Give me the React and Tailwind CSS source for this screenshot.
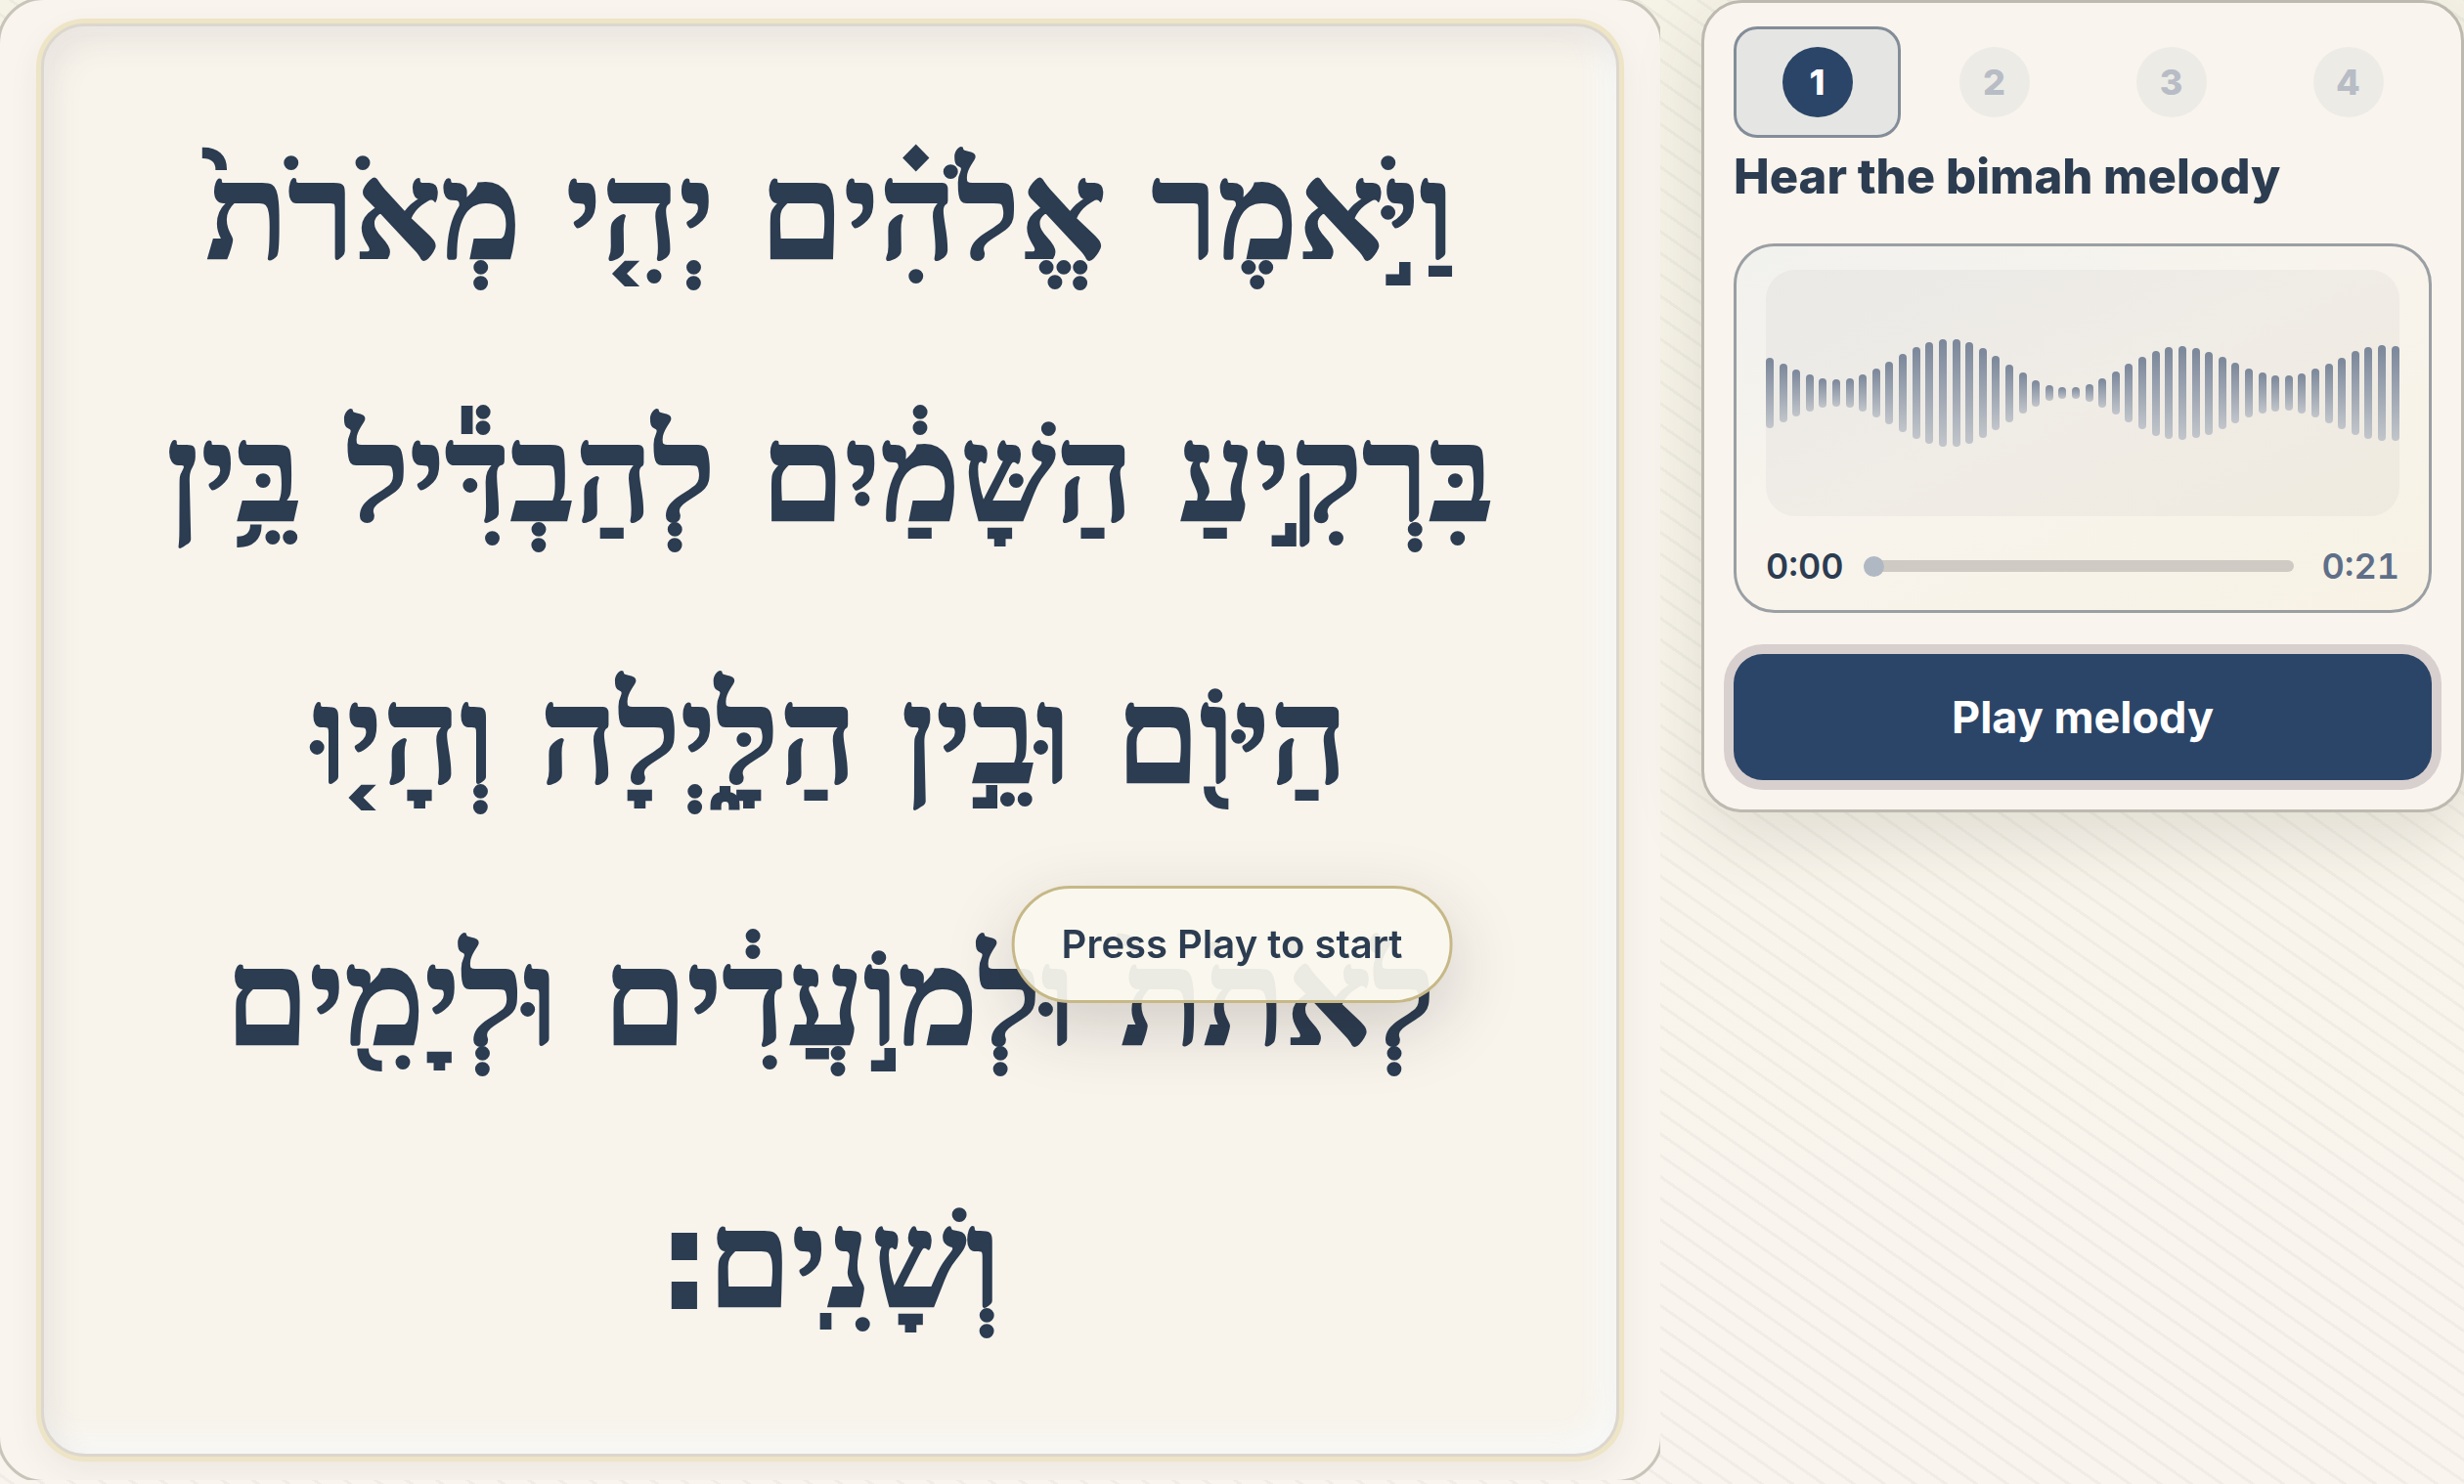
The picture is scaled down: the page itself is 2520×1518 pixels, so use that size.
import clsx from "clsx";

const verse = [
    ["וַיֹּ֣אמֶר", "אֱלֹהִ֗ים", "יְהִ֤י", "מְאֹרֹת֙"],
    ["בִּרְקִ֣יעַ", "הַשָּׁמַ֔יִם", "לְהַבְדִּ֕יל", "בֵּ֥ין"],
    ["הַיּוֹ֖ם", "וּבֵ֣ין", "הַלָּ֑יְלָה", "וְהָי֤וּ"],
    ["לְאֹתֹת֙", "וּלְמוֹ֣עֲדִ֔ים", "וּלְיָמִ֖ים"],
    ["וְשָׁנִֽים"],
];

const bars = [
    72, 60, 48, 38, 30, 28, 30, 38, 50, 64, 80, 94, 104, 110, 110, 104,
    92, 76, 59, 42, 27, 16, 12, 12, 18, 30, 44, 60, 74, 87, 94, 96,
    92, 85, 74, 62, 50, 42, 37, 36, 41, 50, 61, 73, 86, 94, 98, 97,
];

function VersePanel() {
    return (
        <main className="min-w-0 flex-1 self-start overflow-hidden">
            <div className="-m-[3px] rounded-[48px] border-[3px] border-[#c8c4ba] bg-[#f9f4ed] px-[42px] py-6">
                <div
                    dir="rtl"
                    lang="he"
                    className="rounded-[45px] border-[3px] border-[#dbd7cf] bg-[#f8f4ec] pt-[57px] pb-[63px] font-['Liberation_Serif',serif] text-[138px] font-bold leading-[268px] text-[#2c3c51] shadow-[0_0_0_5px_#eee4c6,0_12px_36px_rgba(70,50,60,0.08),inset_12px_18px_30px_rgba(90,70,80,0.08),inset_-12px_-12px_30px_rgba(247,249,249,0.9)] [-webkit-text-stroke:2px_#2c3c51]"
                >
                    {verse.map((line, i) => (
                        <p key={i} className="flex justify-center gap-[46px] whitespace-nowrap">
                            {line.map((word) => (
                                <span key={word}>{word}</span>
                            ))}
                            {i === verse.length - 1 && (
                                <span className="-ms-12 font-['DejaVu_Sans',sans-serif]">׃</span>
                            )}
                        </p>
                    ))}
                </div>
            </div>
        </main>
    );
}

function Steps() {
    return (
        <nav className="grid grid-cols-4 gap-[10px]">
            {[1, 2, 3, 4].map((step) => (
                <button
                    key={step}
                    type="button"
                    disabled={step !== 1}
                    className={clsx(
                        "flex justify-center rounded-3xl border-[3px] py-[18px]",
                        step === 1 ? "border-[#838d99] bg-[#e5e6e3]" : "border-transparent"
                    )}
                >
                    <span
                        className={clsx(
                            "flex size-[72px] items-center justify-center rounded-full text-[36px] font-extrabold",
                            step === 1 ? "bg-[#2b4568] text-white" : "bg-[#ecebe6] text-[#b7bcc5]"
                        )}
                    >
                        {step}
                    </span>
                </button>
            ))}
        </nav>
    );
}

function Player() {
    return (
        <section className="mt-9 rounded-[42px] border-[3px] border-[#9a9fa3] bg-[linear-gradient(155deg,#f1f1ee_0%,#f8f4ed_45%,#f7f2e4_100%)] px-[30px] pt-6 pb-[18px]">
            <div className="flex h-[252px] items-center justify-between rounded-[30px] bg-[#2b3c50]/4">
                {bars.map((height, i) => (
                    <span
                        key={i}
                        className="w-2 rounded-full bg-linear-to-b from-[#7b879a] to-[#c2c6cb]"
                        style={{ height }}
                    />
                ))}
            </div>
            <div className="mt-6 flex h-[54px] items-center text-[36px] font-semibold tabular-nums">
                <span className="w-[100px] text-[#2c3c51]">0:00</span>
                <input
                    type="range"
                    aria-label="Melody position"
                    min="0"
                    max="21"
                    defaultValue="0"
                    className="h-3 min-w-0 flex-1 appearance-none rounded-full bg-[#cfcbc4] [&::-webkit-slider-thumb]:size-[21px] [&::-webkit-slider-thumb]:appearance-none [&::-webkit-slider-thumb]:rounded-full [&::-webkit-slider-thumb]:bg-[#b0b8c3]"
                />
                <span className="w-[108px] text-right text-[#5f6f89]">0:21</span>
            </div>
        </section>
    );
}

function App() {
    return (
        <div className="flex min-h-screen items-start gap-[42px] bg-[#f9f4ed] bg-[repeating-linear-gradient(35deg,transparent_0px,transparent_6px,rgba(60,70,70,0.045)_6px,rgba(60,70,70,0.045)_9px,transparent_9px,transparent_18px),linear-gradient(180deg,#f5f2e6_0%,#f8f4ea_50%,#f9f4ed_85%)] font-['Inter',sans-serif] text-[#2c3c51]">
            <VersePanel />
            <aside className="w-[780px] shrink-0 rounded-[42px] border-[3px] border-[#bdb9b0] bg-[#f9f4ed] px-[30px] pt-6 pb-[30px] shadow-[0_24px_72px_rgba(60,60,50,0.13)]">
                <Steps />
                <h1 className="mt-2 text-[49px] font-extrabold leading-[64px]">Hear the bimah melody</h1>
                <Player />
                <button
                    type="button"
                    className="mt-[42px] h-[129px] w-full rounded-[30px] bg-[#2b4568] text-[45px] font-bold text-white shadow-[0_0_0_10px_#d8cfcf]"
                >
                    Play melody
                </button>
            </aside>
            <div
                role="status"
                className="fixed bottom-[492px] left-1/2 flex h-[120px] -translate-x-1/2 items-center rounded-full border-[3px] border-[#c6b887] bg-[#faf7ee]/93 px-[48px] text-[40px] font-semibold whitespace-nowrap shadow-[0_24px_72px_rgba(40,30,30,0.18)]"
            >
                Press Play to start
            </div>
        </div>
    );
}

export default App;
